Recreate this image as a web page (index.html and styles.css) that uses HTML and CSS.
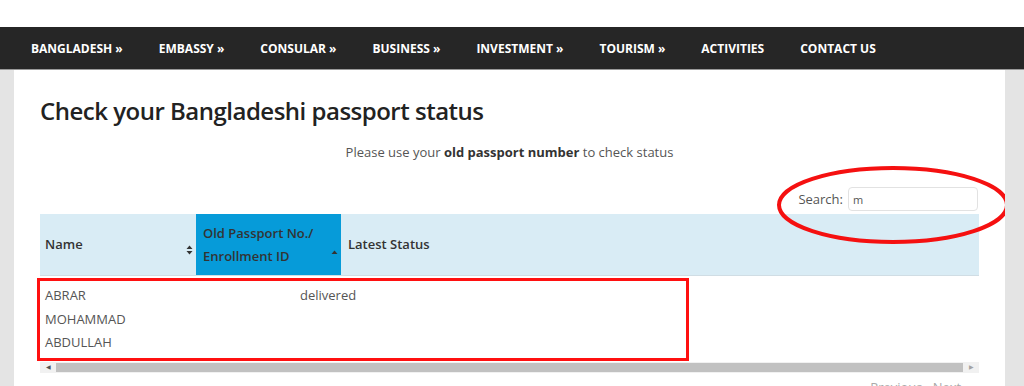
FILE: index.html
```html
<!DOCTYPE html>
<html lang="en">
<head>
    <meta charset="UTF-8">
    <meta name="viewport" content="width=device-width, initial-scale=1.0">
    <title>Check your Bangladeshi passport status</title>
    <link rel="stylesheet" href="styles.css">
</head>
<body>
    <div class="top-space"></div>
    <nav class="menu">
        <a href="#">BANGLADESH &raquo;</a>
        <a href="#">EMBASSY &raquo;</a>
        <a href="#">CONSULAR &raquo;</a>
        <a href="#">BUSINESS &raquo;</a>
        <a href="#">INVESTMENT &raquo;</a>
        <a href="#">TOURISM &raquo;</a>
        <a href="#">ACTIVITIES</a>
        <a href="#">CONTACT US</a>
    </nav>

    <div class="page">
        <div class="container">
            <h1 class="title">Check your Bangladeshi passport status</h1>
            <p class="hint">Please use your <b>old passport number</b> to check status</p>

            <div class="search-row">
                <label for="search">Search:</label>
                <input type="text" id="search" value="m">
            </div>

            <div class="table-wrap">
                <div class="thead">
                    <div class="th col-name">Name <span class="sort">
                        <svg width="7" height="10" viewBox="0 0 7 10"><path d="M3.5 0.5 L6.5 4 H0.5 Z M3.5 9.5 L6.5 6 H0.5 Z" fill="#333"/></svg>
                    </span></div>
                    <div class="th col-id active">Old Passport No./<br>Enrollment ID <span class="sort">
                        <svg width="7" height="5" viewBox="0 0 7 5"><path d="M3.5 0.5 L6.5 4 H0.5 Z" fill="#333"/></svg>
                    </span></div>
                    <div class="th col-status">Latest Status</div>
                </div>
                <div class="tbody">
                    <div class="td name">ABRAR<br>MOHAMMAD<br>ABDULLAH</div>
                    <div class="td status">delivered</div>
                </div>
                <div class="hscroll">
                    <span class="arrow">&#9664;</span>
                    <span class="thumb"></span>
                    <span class="arrow">&#9654;</span>
                </div>
                <div class="pager">&laquo; Previous &nbsp; Next &raquo;</div>
            </div>

            <!-- annotations -->
            <div class="mark-rect"></div>
            <svg class="mark-ellipse" width="240" height="90" viewBox="0 0 240 90">
                <ellipse cx="120" cy="45" rx="114" ry="37" fill="none" stroke="#f51010" stroke-width="4"/>
            </svg>
        </div>
    </div>
</body>
</html>
```

FILE: styles.css
```css
body {
    margin: 0;
    font-family: "Open Sans", Arial, sans-serif;
    background-color: #ffffff;
    color: #555;
}

.top-space {
    height: 27px;
}

.menu {
    display: flex;
    align-items: center;
    height: 42px;
    padding-left: 13px;
    background-color: #262626;
    border-bottom: 1px solid #9a9a9a;
}

.menu a {
    padding: 0 18px;
    color: #ffffff;
    font-size: 12px;
    font-weight: 700;
    text-decoration: none;
}

.page {
    background-color: #e4e4e4;
    padding: 0 19px 0 14px;
}

.container {
    position: relative;
    background-color: #ffffff;
    padding: 24px 26px 0 26px;
    height: 292px;
    overflow: hidden;
}

.title {
    margin: 0;
    font-size: 24px;
    font-weight: 600;
    letter-spacing: -0.5px;
    color: #222;
}

.hint {
    margin: 16px 0 0 0;
    text-align: center;
    font-size: 13px;
    color: #555;
}

.hint b {
    color: #333;
}

.search-row {
    display: flex;
    justify-content: flex-end;
    align-items: center;
    gap: 5px;
    margin-top: 26px;
    padding-right: 1px;
    font-size: 13px;
}

.search-row input {
    width: 120px;
    height: 22px;
    padding: 0 4px;
    border: 1px solid #e2e2e2;
    border-radius: 4px;
    font-family: "Open Sans", Arial, sans-serif;
    font-size: 11px;
    color: #555;
}

.table-wrap {
    margin-top: 3px;
}

.thead {
    display: flex;
    background-color: #d9ecf5;
    height: 61px;
    border-bottom: 1px solid #d0dde4;
    font-size: 13px;
    font-weight: 600;
    color: #333;
}

.th {
    display: flex;
    align-items: center;
    position: relative;
    line-height: 23px;
}

.col-name {
    width: 151px;
    padding-left: 5px;
}

.col-id {
    width: 138px;
    padding-left: 7px;
}

.col-id.active {
    background-color: #069bd9;
}

.col-status {
    flex: 1;
    padding-left: 7px;
}

.sort {
    position: absolute;
    right: 3px;
    top: 25px;
}

.tbody {
    display: flex;
    height: 86px;
    padding-top: 8px;
    box-sizing: border-box;
    font-size: 13px;
    line-height: 23.5px;
    color: #555;
}

.td.name {
    width: 255px;
    padding-left: 5px;
}

.hscroll {
    display: flex;
    height: 11px;
    background-color: #f1f1f1;
}

.hscroll .arrow {
    width: 16px;
    font-size: 6px;
    line-height: 11px;
    text-align: center;
    color: #505050;
}

.hscroll .arrow:last-child {
    color: #a3a3a3;
}

.hscroll .thumb {
    flex: 1;
    margin: 1px 0;
    background-color: #c1c1c1;
}

.pager {
    margin-top: 5px;
    text-align: right;
    padding-right: 8px;
    font-size: 13px;
    color: #aaa;
}

.mark-rect {
    position: absolute;
    left: 23px;
    top: 208px;
    width: 646px;
    height: 77px;
    border: 3px solid #ff1010;
}

.mark-ellipse {
    position: absolute;
    left: 759px;
    top: 90px;
}
```
